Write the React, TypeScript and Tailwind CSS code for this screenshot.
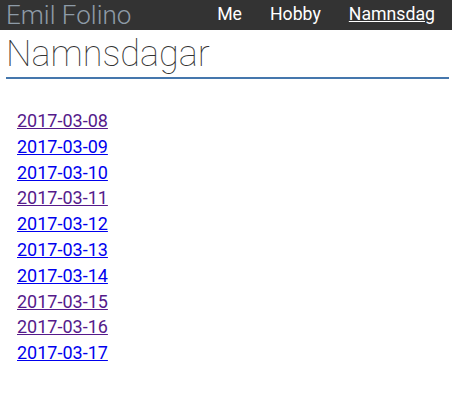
import React from 'react';

const dagar = [
  { d: '2017-03-08', visited: true },
  { d: '2017-03-09', visited: false },
  { d: '2017-03-10', visited: false },
  { d: '2017-03-11', visited: true },
  { d: '2017-03-12', visited: false },
  { d: '2017-03-13', visited: false },
  { d: '2017-03-14', visited: false },
  { d: '2017-03-15', visited: true },
  { d: '2017-03-16', visited: true },
  { d: '2017-03-17', visited: false },
];

export default function App() {
  return (
    <div className="w-[452px] h-[416px] bg-white font-['Roboto',sans-serif]">
      {/* Top bar */}
      <header className="h-[30px] bg-[#333333] flex items-center justify-between pl-[6px] pr-[17px]">
        <span className="text-[26px] font-light text-[#8e9ba7] leading-none">Emil Folino</span>
        <nav className="flex gap-[28px] text-[17.7px] text-white leading-none">
          <a href="#" className="text-white">Me</a>
          <a href="#" className="text-white">Hobby</a>
          <a href="#" className="text-white underline">Namnsdag</a>
        </nav>
      </header>

      <main className="px-[6px]">
        <h1 className="text-[36px] font-thin text-[#333333] leading-[46px] pt-[1px] border-b-2 border-[#4577ad] mr-[-3px]">
          Namnsdagar
        </h1>

        <ul className="mt-[29px] pl-[11px] text-[18px] leading-[25.8px]">
          {dagar.map(x => (
            <li key={x.d}>
              <a href="#" className={x.visited ? 'underline text-[#551a8b]' : 'underline text-[#0000ee]'}>
                {x.d}
              </a>
            </li>
          ))}
        </ul>
      </main>
    </div>
  );
}
